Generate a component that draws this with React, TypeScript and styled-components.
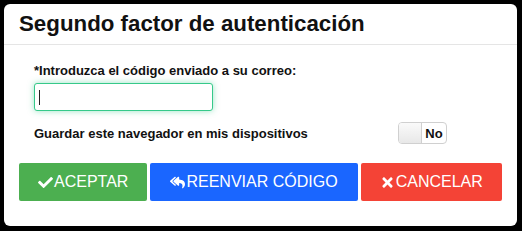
import styled, { createGlobalStyle } from "styled-components"
import { FaCheck, FaReplyAll, FaTimes } from "react-icons/fa"

const GlobalStyle = createGlobalStyle`
    html, body {
        margin: 0;
        padding: 0;
        background: #000;
        font-family: "Liberation Sans", Arial, sans-serif;
    }
`

export default function App() {
    return <Page>
        <GlobalStyle />
        <Modal>
            <Header>
                <Title>Segundo factor de autenticación</Title>
            </Header>
            <Body>
                <Field>
                    <Label htmlFor="code-input">*Introduzca el código enviado a su correo:</Label>
                    <InputWrap>
                        <CodeInput id="code-input" type="text" />
                        <Caret />
                    </InputWrap>
                </Field>
                <SwitchRow>
                    <Label as="span">Guardar este navegador en mis dispositivos</Label>
                    <Toggle>
                        <Knob />
                        <ToggleText>No</ToggleText>
                    </Toggle>
                </SwitchRow>
            </Body>
            <Footer>
                <ActionButton $color="#4caf50" $width={129}><FaCheck />ACEPTAR</ActionButton>
                <ActionButton $color="#1a66ff" $width={208}><FaReplyAll />REENVIAR CÓDIGO</ActionButton>
                <ActionButton $color="#f44336" $width={142}><FaTimes />CANCELAR</ActionButton>
            </Footer>
        </Modal>
    </Page>
}

const Page = styled.div`
    width: 522px;
    height: 231px;
    padding: 4px 5px 5px 4px;
    box-sizing: border-box;
`;

const Modal = styled.div`
    width: 513px;
    height: 222px;
    background: #fff;
    border-radius: 6px;
    overflow: hidden;
`;

const Header = styled.div`
    height: 40px;
    border-bottom: 1px solid #e5e5e5;
    padding: 0 15px;
    display: flex;
    align-items: center;
`;

const Title = styled.h4`
    margin: 0;
    font-size: 22.3px;
    font-weight: bold;
    color: #111;
`;

const Body = styled.div`
    padding: 18px 30px 0;
`;

const Field = styled.div`
    display: flex;
    flex-direction: column;
    gap: 5px;
`;

const Label = styled.label`
    font-size: 13px;
    font-weight: bold;
    color: #111;
`;

const InputWrap = styled.div`
    position: relative;
    width: 179px;
    height: 28px;
`;

const CodeInput = styled.input`
    width: 100%;
    height: 100%;
    box-sizing: border-box;
    border: 1px solid #36c98a;
    border-radius: 3px;
    box-shadow: 0 0 6px rgba(54, 201, 138, 0.5);
    outline: none;
    padding: 0 4px;
    font-size: 14px;
`;

const Caret = styled.span`
    position: absolute;
    left: 5px;
    top: 7px;
    width: 1px;
    height: 15px;
    background: #222;
`;

const SwitchRow = styled.div`
    margin-top: 11px;
    display: flex;
    align-items: center;
    justify-content: space-between;
    width: 413px;
`;

const Toggle = styled.div`
    width: 49px;
    height: 22px;
    box-sizing: border-box;
    border: 1px solid #d0d0d0;
    border-radius: 4px;
    display: flex;
    overflow: hidden;
`;

const Knob = styled.div`
    width: 22px;
    background: linear-gradient(#fafafa, #e8e8e8);
    border-right: 1px solid #d0d0d0;
`;

const ToggleText = styled.span`
    flex: 1;
    display: flex;
    align-items: center;
    justify-content: center;
    font-size: 13px;
    font-weight: bold;
    color: #111;
`;

const Footer = styled.div`
    margin-top: 19px;
    padding: 0 15px;
    display: flex;
    gap: 3px;
`;

const ActionButton = styled.button<{ $color: string; $width: number }>`
    width: ${p => p.$width}px;
    height: 38px;
    border: 0;
    border-radius: 2px;
    background: ${p => p.$color};
    color: #fff;
    font-family: "Liberation Sans", Arial, sans-serif;
    font-size: 16px;
    display: flex;
    align-items: center;
    justify-content: center;
    gap: 1px;
    cursor: pointer;
    svg {
        width: 15px;
        height: 15px;
    }
`;
